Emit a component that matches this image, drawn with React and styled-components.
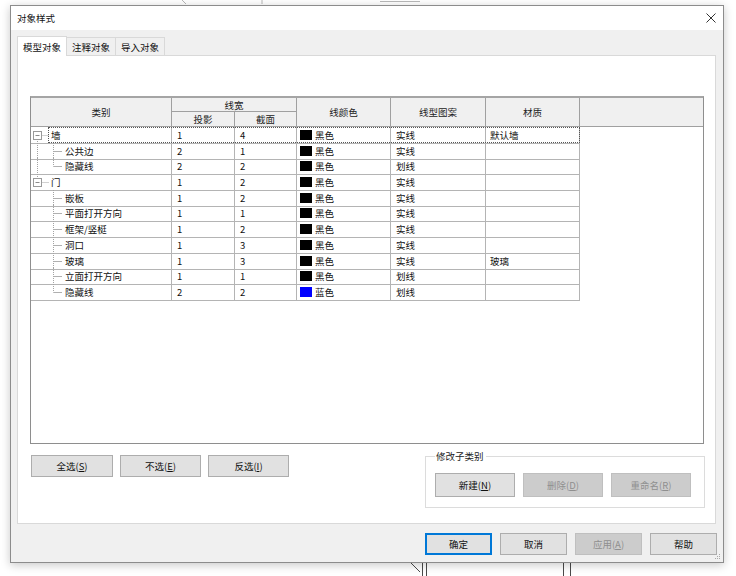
import React from "react";
import styled, { createGlobalStyle, css } from "styled-components";

const COLS = "141px 63px 62px 94px 95px 94px 1fr";

const rows = [
  { name: "墙", kind: "root", down: true, proj: 1, cut: 4, color: "黑色", swatch: "#000", pattern: "实线", material: "默认墙", selected: true },
  { name: "公共边", kind: "child", rootLine: true, proj: 2, cut: 1, color: "黑色", swatch: "#000", pattern: "实线" },
  { name: "隐藏线", kind: "child", rootLine: true, last: true, proj: 2, cut: 2, color: "黑色", swatch: "#000", pattern: "划线" },
  { name: "门", kind: "root", up: true, proj: 1, cut: 2, color: "黑色", swatch: "#000", pattern: "实线" },
  { name: "嵌板", kind: "child", proj: 1, cut: 2, color: "黑色", swatch: "#000", pattern: "实线" },
  { name: "平面打开方向", kind: "child", proj: 1, cut: 1, color: "黑色", swatch: "#000", pattern: "实线" },
  { name: "框架/竖梃", kind: "child", proj: 1, cut: 2, color: "黑色", swatch: "#000", pattern: "实线" },
  { name: "洞口", kind: "child", proj: 1, cut: 3, color: "黑色", swatch: "#000", pattern: "实线" },
  { name: "玻璃", kind: "child", proj: 1, cut: 3, color: "黑色", swatch: "#000", pattern: "实线", material: "玻璃" },
  { name: "立面打开方向", kind: "child", proj: 1, cut: 1, color: "黑色", swatch: "#000", pattern: "划线" },
  { name: "隐藏线", kind: "child", last: true, proj: 2, cut: 2, color: "蓝色", swatch: "#0000ff", pattern: "划线" },
];

function TreeLines({ row }) {
  if (row.kind === "root") {
    return (
      <TreeSvg width="20" height="16" viewBox="0 0 20 16">
        {row.up && <line x1="6.5" y1="0" x2="6.5" y2="4" />}
        {row.down && <line x1="6.5" y1="12" x2="6.5" y2="16" />}
        <line x1="10.5" y1="8.5" x2="18" y2="8.5" />
        <rect x="2.5" y="4.5" width="8" height="8" />
        <line className="solid" x1="4.5" y1="8.5" x2="8.5" y2="8.5" />
      </TreeSvg>
    );
  }
  return (
    <TreeSvg width="34" height="16" viewBox="0 0 34 16">
      {row.rootLine && <line x1="6.5" y1="0" x2="6.5" y2="16" />}
      <line x1="22.5" y1="0" x2="22.5" y2={row.last ? 8.5 : 16} />
      <line className="stub" x1="22.5" y1="8.5" x2="31" y2="8.5" />
    </TreeSvg>
  );
}

export default function App() {
  return (
    <Desktop>
      <GlobalStyle />
      <Backdrop width="736" height="576" viewBox="0 0 736 576">
        <line className="faint" x1="182" y1="0" x2="186" y2="4" />
        <line className="faint" x1="262" y1="0" x2="262" y2="4" />
        <line className="faint" x1="380" y1="1.5" x2="420" y2="1.5" />
        <line x1="404" y1="556" x2="420" y2="572" />
        <line x1="422.5" y1="556" x2="422.5" y2="576" />
        <line x1="426.5" y1="556" x2="426.5" y2="576" />
        <line x1="563.5" y1="556" x2="563.5" y2="576" />
        <line x1="570.5" y1="556" x2="570.5" y2="576" />
      </Backdrop>

      <Dialog>
        <TitleBar>
          <Title>对象样式</Title>
          <CloseIcon width="10" height="10" viewBox="0 0 10 10">
            <line x1="0.5" y1="0.5" x2="9.5" y2="9.5" />
            <line x1="9.5" y1="0.5" x2="0.5" y2="9.5" />
          </CloseIcon>
        </TitleBar>

        <Body>
          <Tabs>
            <Tab $active>模型对象</Tab>
            <Tab>注释对象</Tab>
            <Tab>导入对象</Tab>
          </Tabs>

          <Panel>
            <Grid>
              <Header>
                <HeadCell $rows="1 / 3">类别</HeadCell>
                <HeadCell $cols="2 / 4">线宽</HeadCell>
                <HeadCell $rows="1 / 3" $col="4">线颜色</HeadCell>
                <HeadCell $rows="1 / 3" $col="5">线型图案</HeadCell>
                <HeadCell $rows="1 / 3" $col="6">材质</HeadCell>
                <HeadCell $rows="1 / 3" $col="7" $last />
                <HeadCell $row="2" $col="2">投影</HeadCell>
                <HeadCell $row="2" $col="3">截面</HeadCell>
              </Header>

              {rows.map((r, i) => (
                <Row key={i}>
                  <NameCell>
                    <TreeLines row={r} />
                    <span>{r.name}</span>
                  </NameCell>
                  <Cell $pad={5}>{r.proj}</Cell>
                  <Cell $pad={5}>{r.cut}</Cell>
                  <Cell $pad={3}>
                    <Swatch style={{ background: r.swatch }} />
                    {r.color}
                  </Cell>
                  <Cell $pad={5}>{r.pattern}</Cell>
                  <Cell $pad={4}>{r.material || ""}</Cell>
                  <Cell $blank />
                  {r.selected && <FocusRect />}
                </Row>
              ))}
            </Grid>

            <LowerRow>
              <SelectButtons>
                <Button $w={82}>全选(<u>S</u>)</Button>
                <Button $w={81}>不选(<u>E</u>)</Button>
                <Button $w={81}>反选(<u>I</u>)</Button>
              </SelectButtons>

              <GroupBox>
                <Legend>修改子类别</Legend>
                <GroupButtons>
                  <Button $w={80} $h={24}>新建(<u>N</u>)</Button>
                  <Button $w={80} $h={24} $disabled>删除(<u>D</u>)</Button>
                  <Button $w={80} $h={24} $disabled>重命名(<u>R</u>)</Button>
                </GroupButtons>
              </GroupBox>
            </LowerRow>
          </Panel>

          <Footer>
            <Button $w={67} $focused>确定</Button>
            <Button $w={67}>取消</Button>
            <Button $w={67} $disabled>应用(<u>A</u>)</Button>
            <Button $w={67}>帮助</Button>
          </Footer>
        </Body>

        <Grip width="6" height="6" viewBox="0 0 6 6">
          <rect x="4" y="0" width="1" height="1" />
          <rect x="2" y="2" width="1" height="1" />
          <rect x="4" y="2" width="1" height="1" />
          <rect x="0" y="4" width="1" height="1" />
          <rect x="2" y="4" width="1" height="1" />
          <rect x="4" y="4" width="1" height="1" />
        </Grip>
      </Dialog>
    </Desktop>
  );
}

const GlobalStyle = createGlobalStyle`
  html, body {
    margin: 0;
    padding: 0;
    background: #ffffff;
  }

  body {
    font-family: "Noto Sans CJK SC", "Noto Sans", sans-serif;
    font-size: 9.5px;
    color: #111;
  }

  * {
    box-sizing: border-box;
  }
`;

const Desktop = styled.div`
  position: relative;
  width: 736px;
  height: 576px;
  overflow: hidden;
  padding: 5px 0 0 10px;
  background: #ffffff;
`;

const Backdrop = styled.svg`
  position: absolute;
  top: 0;
  left: 0;
  z-index: 0;

  line {
    stroke: #4a4a4a;
    stroke-width: 1;
  }

  line.faint {
    stroke: #b8b8b8;
  }
`;

const Dialog = styled.div`
  position: relative;
  z-index: 1;
  width: 714px;
  height: 558px;
  display: flex;
  flex-direction: column;
  background: #f0f0f0;
  border: 1px solid #8c8c8c;
  box-shadow: 0 2px 9px rgba(0, 0, 0, 0.22);
`;

const TitleBar = styled.div`
  height: 24px;
  flex: none;
  display: flex;
  align-items: center;
  justify-content: space-between;
  padding: 0 7px 1px 6px;
  background: #ffffff;
`;

const Title = styled.span`
  color: #111;
  font-size: 9.5px;
`;

const CloseIcon = styled.svg`
  margin-top: 1px;

  line {
    stroke: #333;
    stroke-width: 1;
  }
`;

const Body = styled.div`
  flex: 1;
  display: flex;
  flex-direction: column;
  padding: 7px 7px 0 6px;
`;

const Tabs = styled.div`
  height: 18px;
  flex: none;
  display: flex;
  align-items: flex-end;
  position: relative;
  z-index: 1;
`;

const Tab = styled.div`
  height: 18px;
  display: flex;
  align-items: center;
  padding: 0 5px;
  color: #111;
  border: 1px solid #d9d9d9;
  border-bottom: none;
  border-left: none;
  background: #f0f0f0;

  ${(p) =>
    p.$active &&
    css`
      height: 20px;
      border-left: 1px solid #d9d9d9;
      background: #ffffff;
      margin-bottom: -1px;
    `}
`;

const Panel = styled.div`
  flex: 1;
  display: flex;
  flex-direction: column;
  padding: 40px 11px 0 12px;
  background: #ffffff;
  border: 1px solid #d9d9d9;
`;

const Grid = styled.div`
  height: 348px;
  flex: none;
  border: 1px solid #8e8e8e;
  border-top: 2px solid #a5a5a5;
  background: #ffffff;
  overflow: hidden;
`;

const Header = styled.div`
  display: grid;
  grid-template-columns: ${COLS};
  grid-template-rows: 14px 15px;
  background: #f0f0f0;
`;

const HeadCell = styled.div`
  grid-row: ${(p) => p.$rows || p.$row || "1"};
  grid-column: ${(p) => p.$cols || p.$col || "1"};
  display: flex;
  align-items: center;
  justify-content: center;
  color: #222;
  border-bottom: 1px solid #a0a0a0;
  border-right: ${(p) => (p.$last ? "none" : "1px solid #a0a0a0")};
`;

const Row = styled.div`
  position: relative;
  display: grid;
  grid-template-columns: ${COLS};
  height: 15.7px;
`;

const Cell = styled.div`
  display: flex;
  align-items: center;
  padding-left: ${(p) => p.$pad || 0}px;
  white-space: nowrap;
  color: #111;
  border-right: 1px solid #b4b4b4;
  border-bottom: 1px solid #b4b4b4;

  ${(p) =>
    p.$blank &&
    css`
      border: none;
    `}
`;

const NameCell = styled(Cell)`
  padding-left: 0;
  align-items: flex-start;

  span {
    align-self: center;
  }
`;

const TreeSvg = styled.svg`
  flex: none;
  overflow: visible;

  line {
    stroke: #a3a3a3;
    stroke-width: 1;
    stroke-dasharray: 1 1;
  }

  line.stub {
    stroke: #b0b0b0;
    stroke-dasharray: none;
  }

  line.solid {
    stroke: #8a8a8a;
    stroke-dasharray: none;
  }

  rect {
    fill: #ffffff;
    stroke: #9a9a9a;
    stroke-width: 1;
  }
`;

const Swatch = styled.span`
  width: 12px;
  height: 10px;
  margin-right: 3px;
  flex: none;
`;

const FocusRect = styled.div`
  position: absolute;
  top: 0;
  left: 17px;
  width: 532px;
  height: 100%;
  border: 1px dotted #555;
  pointer-events: none;
`;

const LowerRow = styled.div`
  display: flex;
  justify-content: space-between;
  align-items: flex-start;
`;

const SelectButtons = styled.div`
  display: flex;
  gap: 7px;
  margin-top: 11px;
  margin-left: 1px;
`;

const GroupBox = styled.fieldset`
  width: 280px;
  margin: 6px -1px 0 0;
  padding: 0 10px 10px 9px;
  border: 1px solid #dcdcdc;
  min-width: 0;
`;

const Legend = styled.legend`
  padding: 0 2px 0 1px;
  line-height: 12px;
  color: #222;
  font-size: 9.5px;
`;

const GroupButtons = styled.div`
  display: flex;
  gap: 8px;
  margin-top: 11px;
`;

const Button = styled.div`
  width: ${(p) => p.$w}px;
  height: ${(p) => p.$h || 22}px;
  display: flex;
  align-items: center;
  justify-content: center;
  background: #e1e1e1;
  border: 1px solid #adadad;
  color: #111;
  font-size: 9.5px;

  u {
    text-decoration: underline;
  }

  ${(p) =>
    p.$disabled &&
    css`
      background: #cccccc;
      border-color: #bfbfbf;
      color: #8f8f8f;
    `}

  ${(p) =>
    p.$focused &&
    css`
      border-color: #0078d7;
      box-shadow: inset 0 0 0 1px #0078d7;
    `}
`;

const Footer = styled.div`
  height: 38px;
  flex: none;
  display: flex;
  justify-content: flex-end;
  gap: 8px;
  padding-top: 9px;
  margin-right: -1px;
`;

const Grip = styled.svg`
  position: absolute;
  right: 2px;
  bottom: 2px;

  rect {
    fill: #a8a8a8;
  }
`;
